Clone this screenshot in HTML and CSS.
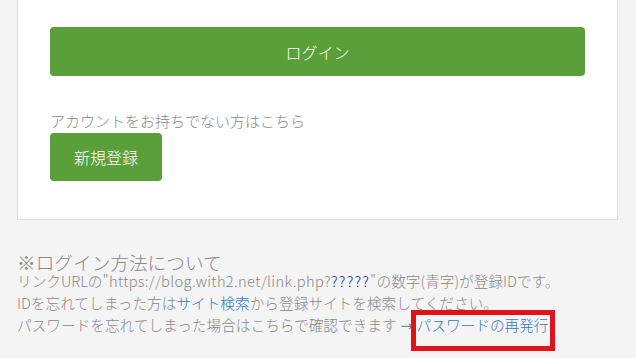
FILE: index.html
```html
<!DOCTYPE html>
<html lang="ja">
<head>
<meta charset="utf-8">
<title>ログイン</title>
<link rel="stylesheet" href="styles.css">
</head>
<body>
<div class="card">
  <a class="btn btn-login" href="#">ログイン</a>
  <p class="signup-note">アカウントをお持ちでない方はこちら</p>
  <a class="btn btn-signup" href="#">新規登録</a>
</div>
<div class="about">
  <h2 class="about-title">※ログイン方法について</h2>
  <p class="about-text">リンクURLの<span class="url">"https://blog.with2.net/link.php?<span class="id">?????</span>"</span>の数字(青字)が登録IDです。<br>IDを忘れてしまった方は<a class="link" href="#">サイト検索</a>から登録サイトを検索してください。<br>パスワードを忘れてしまった場合はこちらで確認できます<span class="arrow">→</span><span class="mark"><a class="link" href="#">パスワードの再発行</a></span></p>
</div>
</body>
</html>
```

FILE: styles.css
```css
html, body {
  margin: 0;
  padding: 0;
}
body {
  background: #f4f4f4;
  font-family: "Noto Sans CJK JP", "Noto Sans", sans-serif;
  font-weight: 300;
  color: #888;
  width: 636px;
  height: 358px;
  overflow: hidden;
}
.card {
  margin-left: 17px;
  width: 535px;
  background: #fff;
  border: 1px solid #e0e0e0;
  border-top: none;
  padding: 27px 32px 38px;
}
.btn {
  display: flex;
  align-items: center;
  justify-content: center;
  background: #5b9f3b;
  color: #fff;
  font-size: 16px;
  text-decoration: none;
  border-radius: 4px;
}
.btn-login {
  height: 49px;
}
.signup-note {
  margin: 34px 0 1px;
  font-size: 15px;
  line-height: 22px;
  color: #888;
}
.btn-signup {
  width: 112px;
  height: 48px;
}
.about {
  padding-left: 17px;
  margin-top: 34px;
}
.about-title {
  margin: 0;
  font-size: 18.67px;
  font-weight: 300;
  line-height: 16px;
  color: #888;
}
.about-text {
  margin: 0;
  font-size: 14.67px;
  line-height: 22px;
  color: #888;
  white-space: nowrap;
}
.url {
  letter-spacing: 0.35px;
}
.id {
  color: #1c1ca6;
  letter-spacing: 1.2px;
}
.link {
  color: #2f7bbf;
  text-decoration: none;
}
.arrow {
  display: inline-block;
  width: 20px;
  text-align: center;
  font-family: "DejaVu Sans", sans-serif;
  font-weight: normal;
}
.mark {
  position: relative;
}
.mark::after {
  content: "";
  position: absolute;
  left: -6px;
  right: -6px;
  top: -4px;
  bottom: -16px;
  border: 5px solid #e3111b;
}
```
